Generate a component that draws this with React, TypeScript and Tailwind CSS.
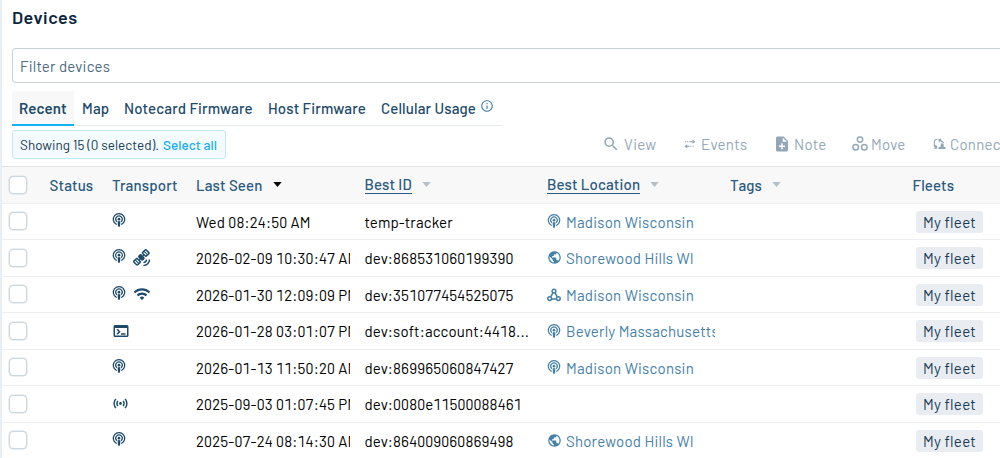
import type { ReactNode } from 'react';
import {
  MdInfoOutline,
  MdNoteAdd,
  MdPublic,
  MdSatelliteAlt,
  MdSearch,
  MdSensors,
  MdTerminal,
  MdWifi,
} from 'react-icons/md';

type IconProps = { className?: string };

const TowerIcon = ({ className }: IconProps) => (
  <svg viewBox="0 0 14 16" width="14" height="16" fill="none" className={className}>
    <path
      d="M4.3 12.3A5.7 5.7 0 1 1 9.7 12.3"
      stroke="currentColor"
      strokeWidth="1.25"
      strokeLinecap="round"
    />
    <path
      d="M4.6 9.4A3.25 3.25 0 1 1 9.4 9.4"
      stroke="currentColor"
      strokeWidth="1.15"
      strokeLinecap="round"
    />
    <circle cx="7" cy="7.2" r="1.35" fill="currentColor" />
    <path d="M5.6 9.6Q7 8.3 8.4 9.6L8 14.2Q7 15.2 6 14.2Z" fill="currentColor" />
  </svg>
);

const TriangulateIcon = ({ className }: IconProps) => (
  <svg
    viewBox="0 0 14 14"
    width="14"
    height="14"
    fill="none"
    stroke="currentColor"
    strokeWidth="1.5"
    className={className}
  >
    <circle cx="7" cy="3.1" r="1.9" />
    <circle cx="2.7" cy="10.6" r="1.9" />
    <circle cx="11.3" cy="10.6" r="1.9" />
    <path d="M6 4.9L3.6 9M8 4.9L10.4 9M4.5 10.9H9.5" />
  </svg>
);

const EventsIcon = ({ className }: IconProps) => (
  <svg viewBox="0 0 12 10" width="12" height="10" className={className}>
    <g stroke="currentColor" strokeWidth="1.1" fill="none">
      <path d="M1 2.7H6" strokeDasharray="1.1 1.1" />
      <path d="M6 2.7H9.5" />
      <path d="M2.5 7.3H5.6" />
      <path d="M6.4 7.3H10.5" strokeDasharray="1.1 1.1" />
    </g>
    <path d="M8.6 .6L11.4 2.7L8.6 4.8ZM3.2 5.2L.4 7.3L3.2 9.4Z" fill="currentColor" />
  </svg>
);

const MoveIcon = ({ className }: IconProps) => (
  <svg
    viewBox="0 0 16 16"
    width="16"
    height="16"
    fill="none"
    stroke="currentColor"
    strokeWidth="1.5"
    className={className}
  >
    <circle cx="8" cy="3.6" r="2.7" />
    <circle cx="3.7" cy="11.2" r="2.8" />
    <circle cx="12.3" cy="11.2" r="2.8" />
  </svg>
);

const ConnectivityIcon = ({ className }: IconProps) => (
  <svg viewBox="0 0 13 12" width="13" height="12" className={className}>
    <path
      d="M4.4 1.2Q1.4 1.2 1.3 4.4Q1.3 6 2 8.4"
      fill="none"
      stroke="currentColor"
      strokeWidth="1.1"
    />
    <path d="M.4 7H1.8L4.2 8V10.8H.6L1.8 9.6Z" fill="currentColor" />
    <path d="M5.4 1H8.6L7.9 2.1L11 4.2L10.2 5.2L7 3.2L6 4.4Z" fill="currentColor" />
    <path d="M5.2 11Q5.3 8.8 7.6 8.4L7.8 5.6H10.6L10.7 8.4Q12.8 8.8 12.9 11Z" fill="currentColor" />
  </svg>
);

const transportIcons = {
  cell: <TowerIcon className="-mt-[3px]" />,
  satellite: <MdSatelliteAlt size={18} className="ml-[7px]" />,
  wifi: <MdWifi size={18} className="ml-[7px]" />,
  soft: <MdTerminal size={18} />,
  lora: <MdSensors size={17} />,
};

const locationIcons = {
  tower: <TowerIcon className="-mt-px -ml-px mr-px" />,
  globe: <MdPublic size={15} className="-mt-px -mr-px -ml-px mr-0" />,
  triangulate: <TriangulateIcon className="-ml-px mr-px" />,
};

type Device = {
  transports: (keyof typeof transportIcons)[];
  lastSeen: string;
  id: string;
  location?: { icon: keyof typeof locationIcons; name: string };
};

const devices: Device[] = [
  {
    transports: ['cell'],
    lastSeen: 'Wed 08:24:50 AM',
    id: 'temp-tracker',
    location: { icon: 'tower', name: 'Madison Wisconsin' },
  },
  {
    transports: ['cell', 'satellite'],
    lastSeen: '2026-02-09 10:30:47 AM',
    id: 'dev:868531060199390',
    location: { icon: 'globe', name: 'Shorewood Hills WI' },
  },
  {
    transports: ['cell', 'wifi'],
    lastSeen: '2026-01-30 12:09:09 PM',
    id: 'dev:351077454525075',
    location: { icon: 'triangulate', name: 'Madison Wisconsin' },
  },
  {
    transports: ['soft'],
    lastSeen: '2026-01-28 03:01:07 PM',
    id: 'dev:soft:account:4418...',
    location: { icon: 'tower', name: 'Beverly Massachusetts' },
  },
  {
    transports: ['cell'],
    lastSeen: '2026-01-13 11:50:20 AM',
    id: 'dev:869965060847427',
    location: { icon: 'tower', name: 'Madison Wisconsin' },
  },
  {
    transports: ['lora'],
    lastSeen: '2025-09-03 01:07:45 PM',
    id: 'dev:0080e11500088461',
  },
  {
    transports: ['cell'],
    lastSeen: '2025-07-24 08:14:30 AM',
    id: 'dev:864009060869498',
    location: { icon: 'globe', name: 'Shorewood Hills WI' },
  },
];

const rowGrid =
  'grid grid-cols-[47.5px_62.5px_84px_168.5px_182.5px_183px_182.5px_1fr] items-center whitespace-nowrap';

const Checkbox = () => (
  <span className="ml-[7px] block size-[18px] rounded-[4px] border border-[#cdd7de] bg-white shadow-[0_0_0_0.5px_#d8e0e6]" />
);

const Caret = ({ className }: IconProps) => (
  <svg viewBox="0 0 10 6" width="9" height="5" className={className}>
    <path d="M0 0H10L5 6Z" fill="currentColor" />
  </svg>
);

const Action = ({
  icon,
  children,
  className,
}: {
  icon: ReactNode;
  children: ReactNode;
  className: string;
}) => (
  <button className={`flex shrink-0 items-center ${className}`}>
    {icon}
    {children}
  </button>
);

const App = () => (
  <div className="h-[458px] w-[1000px] overflow-hidden border-l-2 border-[#e9eef2] bg-white font-['Barlow','Roboto',sans-serif] text-[15px] leading-5 text-[#1d4a6b]">
    <div className="h-12 pt-[6px] pl-2.5">
      <h1 className="text-[18px] leading-[22px] font-semibold tracking-[0.5px] text-[#0b2540]">
        Devices
      </h1>
    </div>

    <div className="ml-2.5 flex h-[35px] items-center rounded-l-[4px] border border-r-0 border-[#c9d2d8] pl-[7px] tracking-[0.2px] text-[#4d6a80]">
      Filter devices
    </div>

    <nav className="mt-2 ml-2.5 flex h-[35px] w-[490px] border-b border-[#e3eaed] leading-[34px] font-medium tracking-[0.15px] whitespace-nowrap">
      <div className="h-[35px] w-[62px] border-b-2 border-[#14b1f5] bg-[#f8f8f8] pl-[7px] font-semibold tracking-[0.1px]">
        Recent
      </div>
      <div className="w-[42px] pl-2">Map</div>
      <div className="w-[144px] pl-2">Notecard Firmware</div>
      <div className="w-[112px] pl-2">Host Firmware</div>
      <div className="flex pl-[9px]">
        Cellular Usage
        <MdInfoOutline size={14} className="mt-[8px] ml-1 text-[#4585ad]" />
      </div>
    </nav>

    <div className="flex h-10 items-start">
      <div className="mt-1 ml-2.5 flex h-[29px] w-[214px] shrink-0 items-center rounded-[3px] border border-[#c0e9f4] bg-[#f3fbfe] pl-[7px] text-[13.5px] tracking-[0.03px] whitespace-nowrap text-[#1b3a54]">
        Showing 15 (0 selected).
        <span className="ml-1 font-medium text-[#16aef2]">Select all</span>
      </div>
      <div className="mt-2 ml-[376px] flex h-5 tracking-[0.3px] text-[#93a7b6]">
        <Action icon={<MdSearch size={18} className="mr-1" />} className="w-[82px]">
          View
        </Action>
        <Action icon={<EventsIcon className="mr-[5px]" />} className="w-[90px]">
          Events
        </Action>
        <Action icon={<MdNoteAdd size={18} className="mr-[3px] -ml-px" />} className="w-[78px]">
          Note
        </Action>
        <Action icon={<MoveIcon className="mr-[3px]" />} className="w-[81px]">
          Move
        </Action>
        <Action icon={<ConnectivityIcon className="mr-1" />} className="w-[110px]">
          Connectivity
        </Action>
      </div>
    </div>

    <div
      className={`${rowGrid} h-[37.5px] border-t border-b border-t-[#dfe2e4] border-b-[#eeeff0] bg-[#f8f8f8] font-medium tracking-[0.15px] text-[#2a5a7e]`}
    >
      <Checkbox />
      <span>Status</span>
      <span>Transport</span>
      <span className="flex items-center">
        Last Seen
        <Caret className="ml-2.5 text-black" />
      </span>
      <span className="flex items-center">
        <span className="border-b border-[#2a5a7e] leading-[17px]">Best ID</span>
        <Caret className="ml-2.5 text-[#b5bfc6]" />
      </span>
      <span className="flex items-center">
        <span className="border-b border-[#2a5a7e] leading-[17px]">Best Location</span>
        <Caret className="ml-2.5 text-[#b5bfc6]" />
      </span>
      <span className="flex items-center">
        Tags
        <Caret className="ml-2.5 text-[#b5bfc6]" />
      </span>
      <span>Fleets</span>
    </div>

    {devices.map((device) => (
      <div
        key={device.id}
        className={`${rowGrid} h-[36.5px] border-b border-[#edeff0] text-black`}
      >
        <Checkbox />
        <span />
        <span className="flex items-center text-[#1d4a6b]">
          {device.transports.map((name) => (
            <span key={name}>{transportIcons[name]}</span>
          ))}
        </span>
        <span className="mr-[15px] overflow-hidden pt-px tracking-[0.18px] tabular-nums">
          {device.lastSeen}
        </span>
        <span className="pt-px tracking-[0.13px] tabular-nums">{device.id}</span>
        <span className="mr-[15px] flex items-center gap-1 overflow-hidden pt-px pl-px tracking-[0.22px] text-[#4580a8]">
          {device.location && (
            <>
              <span className="shrink-0">{locationIcons[device.location.icon]}</span>
              {device.location.name}
            </>
          )}
        </span>
        <span />
        <span className="mt-px ml-[3.5px] w-[67px] rounded-[3px] bg-[#e9edf1] text-center leading-[22px] tracking-[0.3px] text-[#173a57]">
          My fleet
        </span>
      </div>
    ))}
  </div>
);

export default App;
